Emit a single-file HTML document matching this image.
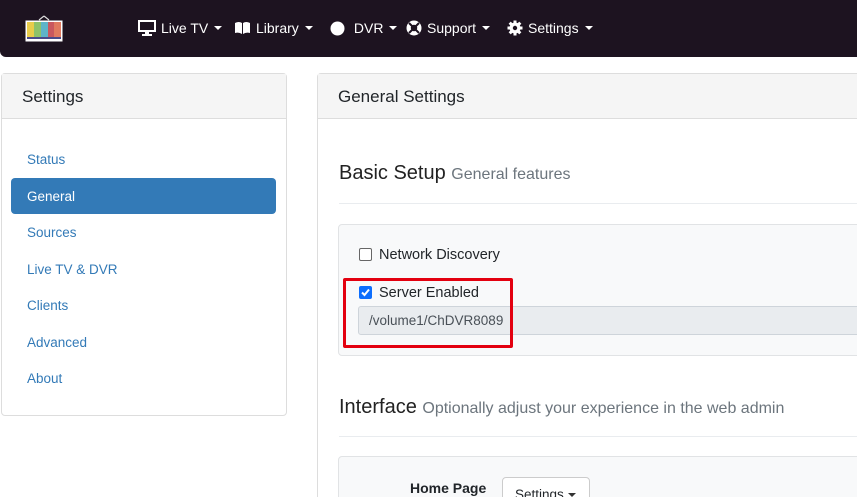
<!DOCTYPE html>
<html style="overflow:hidden;height:497px"><head><meta charset="utf-8"><style>
*{box-sizing:border-box;margin:0;padding:0}
body{width:857px;height:497px;overflow:hidden;background:#fff;font-family:"Liberation Sans","DejaVu Sans",sans-serif;color:#212529;position:relative}
.nav{position:absolute;left:0;top:0;width:857px;height:57px;background:#1d1320;border-radius:0 0 0 6px}
.ni{position:absolute;top:20px;color:#fff;font-size:14px;display:flex;align-items:center;gap:5px}
.car{display:inline-block;width:0;height:0;border-left:4px solid transparent;border-right:4px solid transparent;border-top:4px solid #fff;margin-left:1px}
.panel{position:absolute;border:1px solid #ddd;border-radius:4px;background:#fff}
.ph{height:45px;background:#f5f5f5;border-bottom:1px solid #ddd;font-size:17px;padding:13px 0 0 20px}
.li{position:absolute;left:25px;font-size:13.5px;color:#337ab7}
.act{position:absolute;left:9px;top:104px;width:265px;height:36px;background:#337ab7;border-radius:4px}
.well{position:absolute;background:#f8f9fa;border:1px solid #e1e3e5;border-radius:4px}
.h{position:absolute;left:339px;font-size:20px;color:#222}
.h small{font-size:16px;color:#6c757d}
.hr{position:absolute;left:339px;width:518px;height:1px;background:#e9ecef}
.cb{position:absolute;width:13px;height:13px;border:1px solid #666;border-radius:2px;background:#fff}
</style></head><body>
<div class="nav">
 <svg style="position:absolute;left:25px;top:15px" width="38" height="27" viewBox="0 0 38 27">
  <path d="M14 5 L19 1 M24 5 L19 1" stroke="#ddd" stroke-width="1.2" fill="none"/>
  <rect x="0.5" y="5.5" width="37" height="21" fill="#fff"/>
  <rect x="2" y="7" width="7" height="17" fill="#e8cc4b"/><rect x="9" y="7" width="7" height="17" fill="#8ec26a"/>
  <rect x="16" y="7" width="7" height="17" fill="#5fb4c9"/><rect x="23" y="7" width="6" height="17" fill="#c9585f"/>
  <rect x="29" y="7" width="7" height="17" fill="#e07a5f"/><rect x="2" y="22" width="34" height="2" fill="#4a4a8a"/>
 </svg>
 <div class="ni" style="left:138px"><svg width="18" height="16" viewBox="0 0 18 16"><rect x="1" y="1" width="16" height="10" fill="none" stroke="#fff" stroke-width="2"/><rect x="7" y="11" width="4" height="3" fill="#fff"/><rect x="4" y="14" width="10" height="2" fill="#fff"/></svg>Live TV<span class="car"></span></div>
 <div class="ni" style="left:234px"><svg width="17" height="14" viewBox="0 0 17 14"><path d="M1 2 Q5 0 8 2 V13 Q5 11 1 12Z M9 2 Q12 0 16 2 V12 Q12 11 9 13Z" fill="#fff"/></svg>Library<span class="car"></span></div>
 <div class="ni" style="left:330px"><svg width="15" height="15"><circle cx="7.5" cy="7.5" r="7" fill="#fff"/></svg>&nbsp;DVR<span class="car"></span></div>
 <div class="ni" style="left:406px"><svg width="16" height="16" viewBox="0 0 16 16"><circle cx="8" cy="8" r="7.5" fill="#fff"/><circle cx="8" cy="8" r="3.2" fill="#1d1320"/><path d="M3 3 L6 6 M13 3 L10 6 M3 13 L6 10 M13 13 L10 10" stroke="#1d1320" stroke-width="2"/></svg>Support<span class="car"></span></div>
 <div class="ni" style="left:507px"><svg width="16" height="16" viewBox="0 0 16 16"><g fill="#fff"><circle cx="8" cy="8" r="5.5"/><rect x="6.5" y="0.5" width="3" height="15"/><rect x="0.5" y="6.5" width="15" height="3"/><rect x="6.5" y="0.5" width="3" height="15" transform="rotate(45 8 8)"/><rect x="6.5" y="0.5" width="3" height="15" transform="rotate(-45 8 8)"/></g><circle cx="8" cy="8" r="2.2" fill="#1d1320"/></svg>Settings<span class="car"></span></div>
</div>

<div class="panel" style="left:1px;top:73px;width:286px;height:343px">
 <div class="ph">Settings</div>
 <div class="act"></div>
 <div class="li" style="top:78px">Status</div>
 <div class="li" style="top:115px;color:#fff">General</div>
 <div class="li" style="top:151px">Sources</div>
 <div class="li" style="top:188px">Live TV &amp; DVR</div>
 <div class="li" style="top:224px">Clients</div>
 <div class="li" style="top:261px">Advanced</div>
 <div class="li" style="top:297px">About</div>
</div>

<div class="panel" style="left:317px;top:73px;width:545px;height:440px;border-right:none">
 <div class="ph">General Settings</div>
</div>
<div class="h" style="top:162px">Basic Setup <small>General features</small></div>
<div class="hr" style="top:203px"></div>
<div class="well" style="left:338px;top:224px;width:525px;height:132px"></div>
<div class="cb" style="left:359px;top:248px"></div>
<div style="position:absolute;left:379px;top:247px;font-size:14.5px">Network Discovery</div>
<div class="cb" style="left:359px;top:286px;background:#0d6efd;border-color:#0d6efd"><svg width="11" height="11" viewBox="0 0 11 11" style="position:absolute;left:0;top:0"><path d="M2 5.5 L4.5 8 L9 2.5" stroke="#fff" stroke-width="2" fill="none"/></svg></div>
<div style="position:absolute;left:379px;top:285px;font-size:14.5px">Server Enabled</div>
<div style="position:absolute;left:358px;top:306px;width:505px;height:29px;background:#e9ecef;border:1px solid #ced4da;border-radius:3px;font-size:13.5px;color:#495057;padding:6px 0 0 10px">/volume1/ChDVR8089</div>
<div style="position:absolute;left:343px;top:278px;width:170px;height:70px;border:3px solid #e3000f;border-radius:2px"></div>
<div class="h" style="top:396px">Interface <small>Optionally adjust your experience in the web admin</small></div>
<div class="hr" style="top:436px"></div>
<div class="well" style="left:338px;top:456px;width:525px;height:50px"></div>
<div style="position:absolute;left:410px;top:480px;font-size:14px;font-weight:bold">Home Page</div>
<div style="position:absolute;left:502px;top:477px;width:88px;height:34px;background:#fff;border:1px solid #ccc;border-radius:4px;font-size:13.5px;padding:9px 0 0 12px">Settings<span class="car" style="border-top-color:#333;margin-left:4px;vertical-align:middle"></span></div>
</body></html>
